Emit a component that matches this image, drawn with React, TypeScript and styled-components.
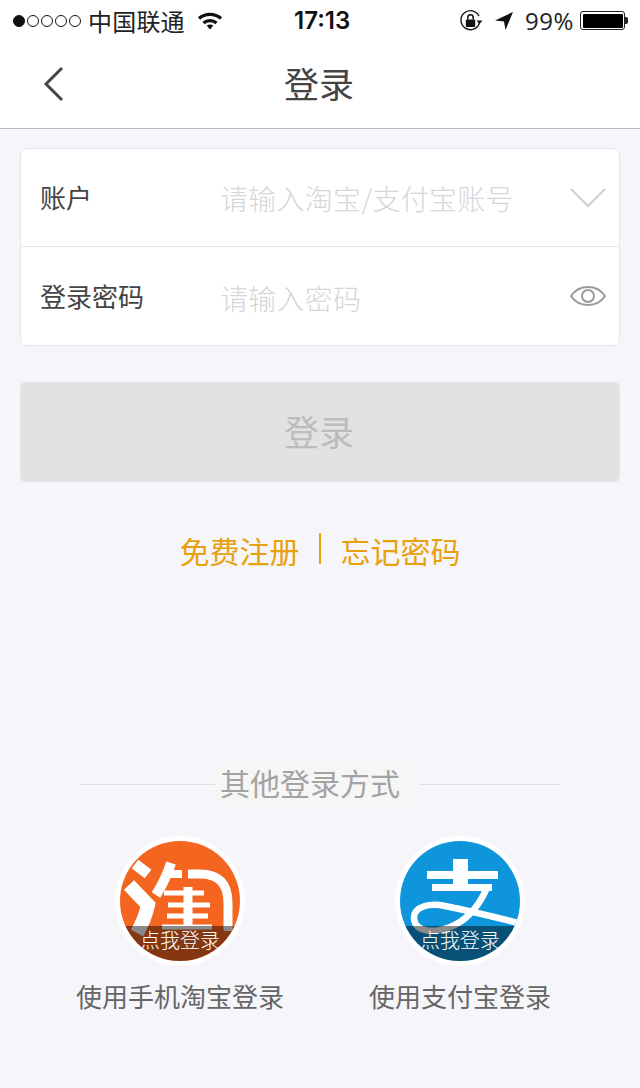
import React from "react";
import styled, { createGlobalStyle } from "styled-components";

const Global = createGlobalStyle`
  html, body { margin: 0; padding: 0; background: #f5f5fa; }
  body { font-family: "Noto Sans CJK SC", "Liberation Sans", sans-serif; }
  * { box-sizing: border-box; }
`;
const Page = styled.div`
  width: 640px; height: 1088px; background: #f5f5fa; overflow: hidden;
`;
const Header = styled.header`
  height: 129px; background: #fff; border-bottom: 1px solid #b9b8c2;
`;
const StatusBar = styled.div`
  height: 41px; display: flex; align-items: center; padding: 0 15px 0 13px;
  color: #111; font-size: 24px; position: relative;
`;
const Dots = styled.div`display: flex; gap: 2px; margin-right: 7px;`;
const Dot = styled.span<{ $on?: boolean }>`
  width: 12px; height: 12px; border-radius: 50%; border: 1px solid #111;
  background: ${(p) => (p.$on ? "#111" : "transparent")};
`;
const Carrier = styled.span`font-weight: 400; line-height: 39px; color: #222; letter-spacing: .2px;`;
const Clock = styled.span`
  position: absolute; left: 294px; top: 0;
  font: 600 24px/41px Inter, "Liberation Sans", sans-serif; color: #111;
`;
const Right = styled.div`margin-left: auto; display: flex; align-items: center;`;
const Percent = styled.span`
  font: 400 24px/41px "Open Sans", "Liberation Sans", sans-serif; color: #222; margin: 0 6px 0 11px; letter-spacing: .6px;
`;
const Battery = styled.div`
  width: 45px; height: 19px; border: 1px solid #222; border-radius: 3px; padding: 1.5px;
  position: relative; display: flex;
  &::after { content: ""; position: absolute; right: -4px; top: 5px; width: 3px; height: 7px; background: #222; border-radius: 0 2px 2px 0; }
`;
const BatteryFill = styled.div`flex: 1; background: #000; border-radius: 1px;`;
const Nav = styled.div`
  height: 87px; display: flex; align-items: center; justify-content: center; position: relative;
`;
const Back = styled.svg`position: absolute; left: 42px; top: 25px;`;
const Title = styled.h1`
  margin: 0 2px 0 0; font-size: 35px; font-weight: 400; color: #444; line-height: 83px; height: 87px;
`;
const Main = styled.main`padding: 19px 20px 0;`;
const Card = styled.section`
  background: #fff; border: 1px solid #e6e6ea; border-radius: 6px; height: 198px;
`;
const Row = styled.div<{ $divided?: boolean }>`
  height: 98px; display: flex; align-items: center; padding: 0 12px 0 19px;
  ${(p) => p.$divided && "border-bottom: 1px solid #e4e4e8;"}
`;
const FieldLabel = styled.label`
  width: 180px; font-size: 26px; font-weight: 400; color: #444; line-height: 36px; margin-top: -1px;
`;
const Placeholder = styled.span<{ $low?: boolean }>`
  flex: 1; font-size: 28px; font-weight: 300; color: #d6d6d8; letter-spacing: .25px; line-height: 40px;
  margin-top: ${(p) => (p.$low ? "4px" : "0")};
`;
const SubmitButton = styled.button`
  display: block; width: 600px; height: 100px; margin-top: 36px; border: 0; border-radius: 6px;
  background: #e2e2e2; color: #bcbcbc; font: 400 35px "Noto Sans CJK SC", sans-serif; padding: 0 2px 4px 0;
`;
const Links = styled.div`
  height: 40px; margin-top: 48px; display: flex; align-items: center; justify-content: center;
  color: #e9a00d; font-size: 30px; font-weight: 400;
`;
const LinkSep = styled.span`
  width: 2px; height: 31px; background: #e9a00d; margin: -4px 20px 0 19px;
`;
const Divider = styled.div`
  margin: 194px 60px 0; height: 40px; display: flex; align-items: center;
`;
const Line = styled.div<{ $w: number }>`width: ${(p) => p.$w}px; height: 1px; background: #dedee6;`;
const DividerText = styled.div`
  width: 205px; height: 40px; padding-left: 5px; background: #f6f6f7; color: #a3a3a3;
  font-size: 30px; font-weight: 400; line-height: 37px; white-space: nowrap;
`;
const Methods = styled.div`
  margin-top: 32px; display: grid; grid-template-columns: 280px 280px; justify-content: center;
`;
const Method = styled.div`display: flex; flex-direction: column; align-items: center;`;
const Ring = styled.div`
  width: 130px; height: 130px; border-radius: 50%; background: #fff; padding: 5px;
`;
const Disc = styled.div<{ $bg: string }>`
  width: 120px; height: 120px; border-radius: 50%; background: ${(p) => p.$bg}; overflow: hidden; position: relative;
  svg { display: block; }
`;
const Shade = styled.div`
  position: absolute; left: 0; right: 0; bottom: 0; height: 35px; background: rgba(0,0,0,.46);
  color: #fff; font-size: 20px; font-weight: 300; line-height: 27px; text-align: center;
`;
const MethodLabel = styled.div`
  margin-top: 11px; font-size: 26px; font-weight: 400; color: #666; line-height: 38px; white-space: nowrap;
`;

const Wifi = () => (
  <svg width="26" height="20" viewBox="0 0 26 20" style={{ marginLeft: 12 }}>
    <g fill="none" stroke="#111" strokeWidth="3.2">
      <path d="M2 7.5C8 2 18 2 24 7.5" />
      <path d="M6.5 12C10 8.8 16 8.8 19.5 12" />
    </g>
    <path d="M9.7 14.5C11.7 13 14.3 13 16.3 14.5L13 18.5Z" fill="#111" />
  </svg>
);
const RotationLock = () => (
  <svg width="24" height="24" viewBox="0 0 24 24">
    <path d="M20.5 14A9.5 9.5 0 1 1 20 7" fill="none" stroke="#111" strokeWidth="1.4" />
    <path d="M17.5 11.5h6L20.5 15Z" fill="#111" />
    <rect x="6.8" y="10.5" width="9.4" height="7.5" rx="1" fill="#111" />
    <path d="M8.8 10.5V8.5a2.7 2.7 0 0 1 5.4 0v2" fill="none" stroke="#111" strokeWidth="1.5" />
  </svg>
);
const Location = () => (
  <svg width="20" height="20" viewBox="0 0 20 20" style={{ marginLeft: 11 }}>
    <path d="M19 1L1 9.5L10 10.5L11.5 19Z" fill="#111" />
  </svg>
);
const TaobaoMark = () => (
  <svg width="120" height="120" viewBox="0 0 120 120">
    <g fill="none" stroke="#fff">
      <path d="M15 23L28 33" strokeWidth="11" />
      <path d="M9 44L28 64Q25 78 17 92" strokeWidth="14" />
      <path d="M51 22Q46 38 36 54" strokeWidth="10" />
      <path d="M46 33H62" strokeWidth="8" />
      <path d="M68 33H80Q108 33 108 62V90" strokeWidth="9" />
      <path d="M44 52H84M48 64H90M47 75H88M42 86H92" strokeWidth="5" />
      <path d="M68 46V86" strokeWidth="9" />
    </g>
  </svg>
);
const AlipayMark = () => (
  <svg width="120" height="120" viewBox="0 0 120 120">
    <path d="M53 18H68V30H98V38H68V43H92V50H32V43H53V38H27V30H53Z" fill="#fff" />
    <path d="M86 49C78 66 66 80 50 86C35 92 16 92 14 78C13 65 30 62 45 65C70 70 95 76 122 83" fill="none" stroke="#fff" strokeWidth="6.5" />
  </svg>
);

export default function App() {
  return (
    <Page>
      <Global />
      <Header>
        <StatusBar>
          <Dots>
            <Dot $on /><Dot /><Dot /><Dot /><Dot />
          </Dots>
          <Carrier>中国联通</Carrier>
          <Wifi />
          <Clock>17:13</Clock>
          <Right>
            <RotationLock />
            <Location />
            <Percent>99%</Percent>
            <Battery><BatteryFill /></Battery>
          </Right>
        </StatusBar>
        <Nav>
          <Back width="24" height="36" viewBox="0 0 24 36">
            <path d="M20 2L4 18L20 34" fill="none" stroke="#444" strokeWidth="3" />
          </Back>
          <Title>登录</Title>
        </Nav>
      </Header>
      <Main>
        <Card>
          <Row $divided>
            <FieldLabel>账户</FieldLabel>
            <Placeholder>请输入淘宝/支付宝账号</Placeholder>
            <svg width="38" height="22" viewBox="0 0 38 22">
              <path d="M2 2L19 19L36 2" fill="none" stroke="#cfcfcf" strokeWidth="2" />
            </svg>
          </Row>
          <Row>
            <FieldLabel>登录密码</FieldLabel>
            <Placeholder $low>请输入密码</Placeholder>
            <svg width="38" height="26" viewBox="0 0 38 26">
              <path d="M2 13C10 1 28 1 36 13C28 25 10 25 2 13Z" fill="none" stroke="#9a9a9a" strokeWidth="2" />
              <circle cx="19" cy="13" r="6" fill="none" stroke="#9a9a9a" strokeWidth="2" />
            </svg>
          </Row>
        </Card>
        <SubmitButton>登录</SubmitButton>
        <Links>
          <span>免费注册</span>
          <LinkSep />
          <span>忘记密码</span>
        </Links>
        <Divider>
          <Line $w={135} />
          <DividerText>其他登录方式</DividerText>
          <Line $w={140} />
        </Divider>
        <Methods>
          <Method>
            <Ring>
              <Disc $bg="#f4661f"><TaobaoMark /><Shade>点我登录</Shade></Disc>
            </Ring>
            <MethodLabel>使用手机淘宝登录</MethodLabel>
          </Method>
          <Method>
            <Ring>
              <Disc $bg="#0f95db"><AlipayMark /><Shade>点我登录</Shade></Disc>
            </Ring>
            <MethodLabel>使用支付宝登录</MethodLabel>
          </Method>
        </Methods>
      </Main>
    </Page>
  );
}
